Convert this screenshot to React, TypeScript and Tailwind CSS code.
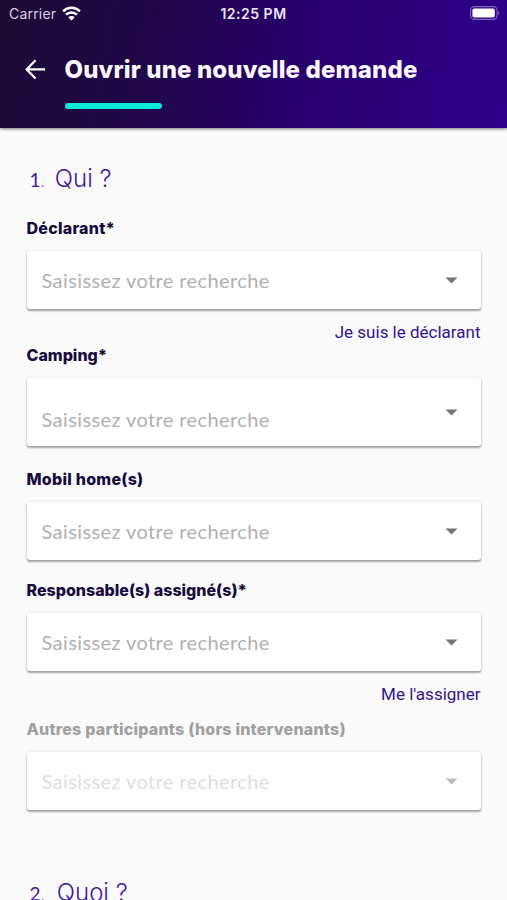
import React from 'react';

interface FieldProps {
    label: string;
    className: string;
    labelClassName?: string;
    tall?: boolean;
    disabled?: boolean;
    action?: string;
}

const PLACEHOLDER = 'Saisissez votre recherche';

const StatusBar: React.FC = () => (
    <div className="h-7 px-[9px] grid grid-cols-3 items-center font-['Inter'] text-white">
        <div className="flex items-center gap-[6px]">
            <span className="text-[14px] leading-7 text-[#d9d0e6] tracking-[0.2px]">Carrier</span>
            <svg width="19" height="15" viewBox="0 0 19 15" fill="none" stroke="#fff" strokeWidth="2.5" className="-mt-[2px]">
                <path d="M1.1 5.3a12 12 0 0 1 16.8 0" />
                <path d="M4 8.7a7.9 7.9 0 0 1 11 0" />
                <path d="M6.3 11.2a4.6 4.6 0 0 1 6.4 0L9.5 14.4Z" fill="#fff" stroke="none" />
            </svg>
        </div>
        <span className="text-center text-[14px] leading-7 font-semibold tracking-[0.5px] text-[#ece4f5]">12:25 PM</span>
        <svg className="justify-self-end -mr-[2px] -mt-[2px]" width="30" height="14" viewBox="0 0 30 14" fill="none">
            <rect x="0.6" y="0.6" width="26.4" height="12.8" rx="3.6" stroke="#8067bd" strokeWidth="1.1" />
            <rect x="2.4" y="2.4" width="22.4" height="9.2" rx="1.8" fill="#fff" />
            <path d="M28.2 4.8c1.4.7 1.4 3.7 0 4.4Z" fill="#8067bd" />
        </svg>
    </div>
);

const Header: React.FC = () => (
    <header className="h-[127.5px] shrink-0 bg-linear-[100deg,#1d0b35_0%,#20074a_30%,#28006e_60%,#2e008b_100%] shadow-[0_1px_3px_rgba(0,0,0,0.55)]">
        <StatusBar />
        <div className="mt-[26px] pl-[24px] h-8 flex items-center">
            <svg className="w-[22px] h-[22px] mr-[18.5px] -mt-[2px]" viewBox="0 0 22 22" fill="none" stroke="#fff" strokeWidth="2.2">
                <path d="M21 11.4H3M11.6 2.2 2.6 11.4l9 9.2" />
            </svg>
            <h1 className="font-['Inter'] text-[24px] leading-8 font-extrabold text-[#fdf7ff] tracking-[0.13px] whitespace-nowrap">Ouvrir une nouvelle demande</h1>
        </div>
        <div className="mt-[17px] ml-[64.5px] w-[97.5px] h-[5.5px] rounded-full bg-[#0aecd8]" />
    </header>
);

const SectionTitle: React.FC<{ index: string; title: string; className: string; titleClassName: string }> = ({ index, title, className, titleClassName }) => (
    <h2 className={`h-8 pl-[3px] flex items-baseline text-[#4216a0] whitespace-nowrap ${className}`}>
        <span className="text-[19px] leading-8">{index}</span>
        <span className="text-[18px] leading-8 text-[#dd6fd0]">.</span>
        <span className={`font-['Inter'] text-[24px] leading-[34px] font-light ${titleClassName}`}>{title}</span>
    </h2>
);

const Field: React.FC<FieldProps> = ({ label, className, labelClassName = '', tall, disabled, action }) => (
    <div className={className}>
        <label
            className={`block h-6 font-['Inter'] text-[16px] leading-6 font-extrabold whitespace-nowrap ${disabled ? 'text-[#a0a0a0]' : 'text-[#170a3c]'} ${labelClassName}`}
        >
            {label}
        </label>
        <div
            className={`mt-[11px] pl-[15px] pr-[23px] flex items-center justify-between rounded-[3px] bg-white shadow-[0_2px_2px_-0.5px_rgba(0,0,0,0.33),0_0_3px_rgba(0,0,0,0.12)] ${tall ? 'h-[68px]' : 'h-[58px]'}`}
        >
            <span className={`text-[20px] leading-6 tracking-[0.4px] whitespace-nowrap ${tall ? 'mt-[14px]' : ''} ${disabled ? 'text-[#dedede]' : 'text-[#b0b0b0]'}`}>
                {PLACEHOLDER}
            </span>
            <svg width="13" height="7" viewBox="0 0 13 7" className="mt-[1px]">
                <path d="M0.5 0.5h12l-6 6Z" fill={disabled ? '#bdbdbd' : '#747474'} />
            </svg>
        </div>
        {action && (
            <div className="mt-[11px] h-[23px] text-right">
                <button className="font-['Roboto'] text-[17px] leading-6 text-[#37128f] whitespace-nowrap">{action}</button>
            </div>
        )}
    </div>
);

export default function App() {
    return (
        <div className="h-[900px] w-full overflow-hidden flex flex-col bg-[#fafafa] font-['Lato',sans-serif]">
            <Header />
            <main className="px-[26.5px] pt-[34.5px]">
                <SectionTitle index="1" title="Qui ?" className="" titleClassName="ml-[10px]" />
                <Field label="Déclarant*" className="mt-[22px]" action="Je suis le déclarant" labelClassName="tracking-[0.25px]" />
                <Field label="Camping*" className="mt-0" tall />
                <Field label="Mobil home(s)" className="mt-[21px]" labelClassName="tracking-[0.25px]" />
                <Field label="Responsable(s) assigné(s)*" className="mt-[18px]" action="Me l'assigner" />
                <Field label="Autres participants (hors intervenants)" className="mt-[12px]" disabled labelClassName="tracking-[0.22px]" />
                <SectionTitle index="2" title="Quoi ?" className="mt-[66px]" titleClassName="ml-[12px]" />
            </main>
        </div>
    );
}
